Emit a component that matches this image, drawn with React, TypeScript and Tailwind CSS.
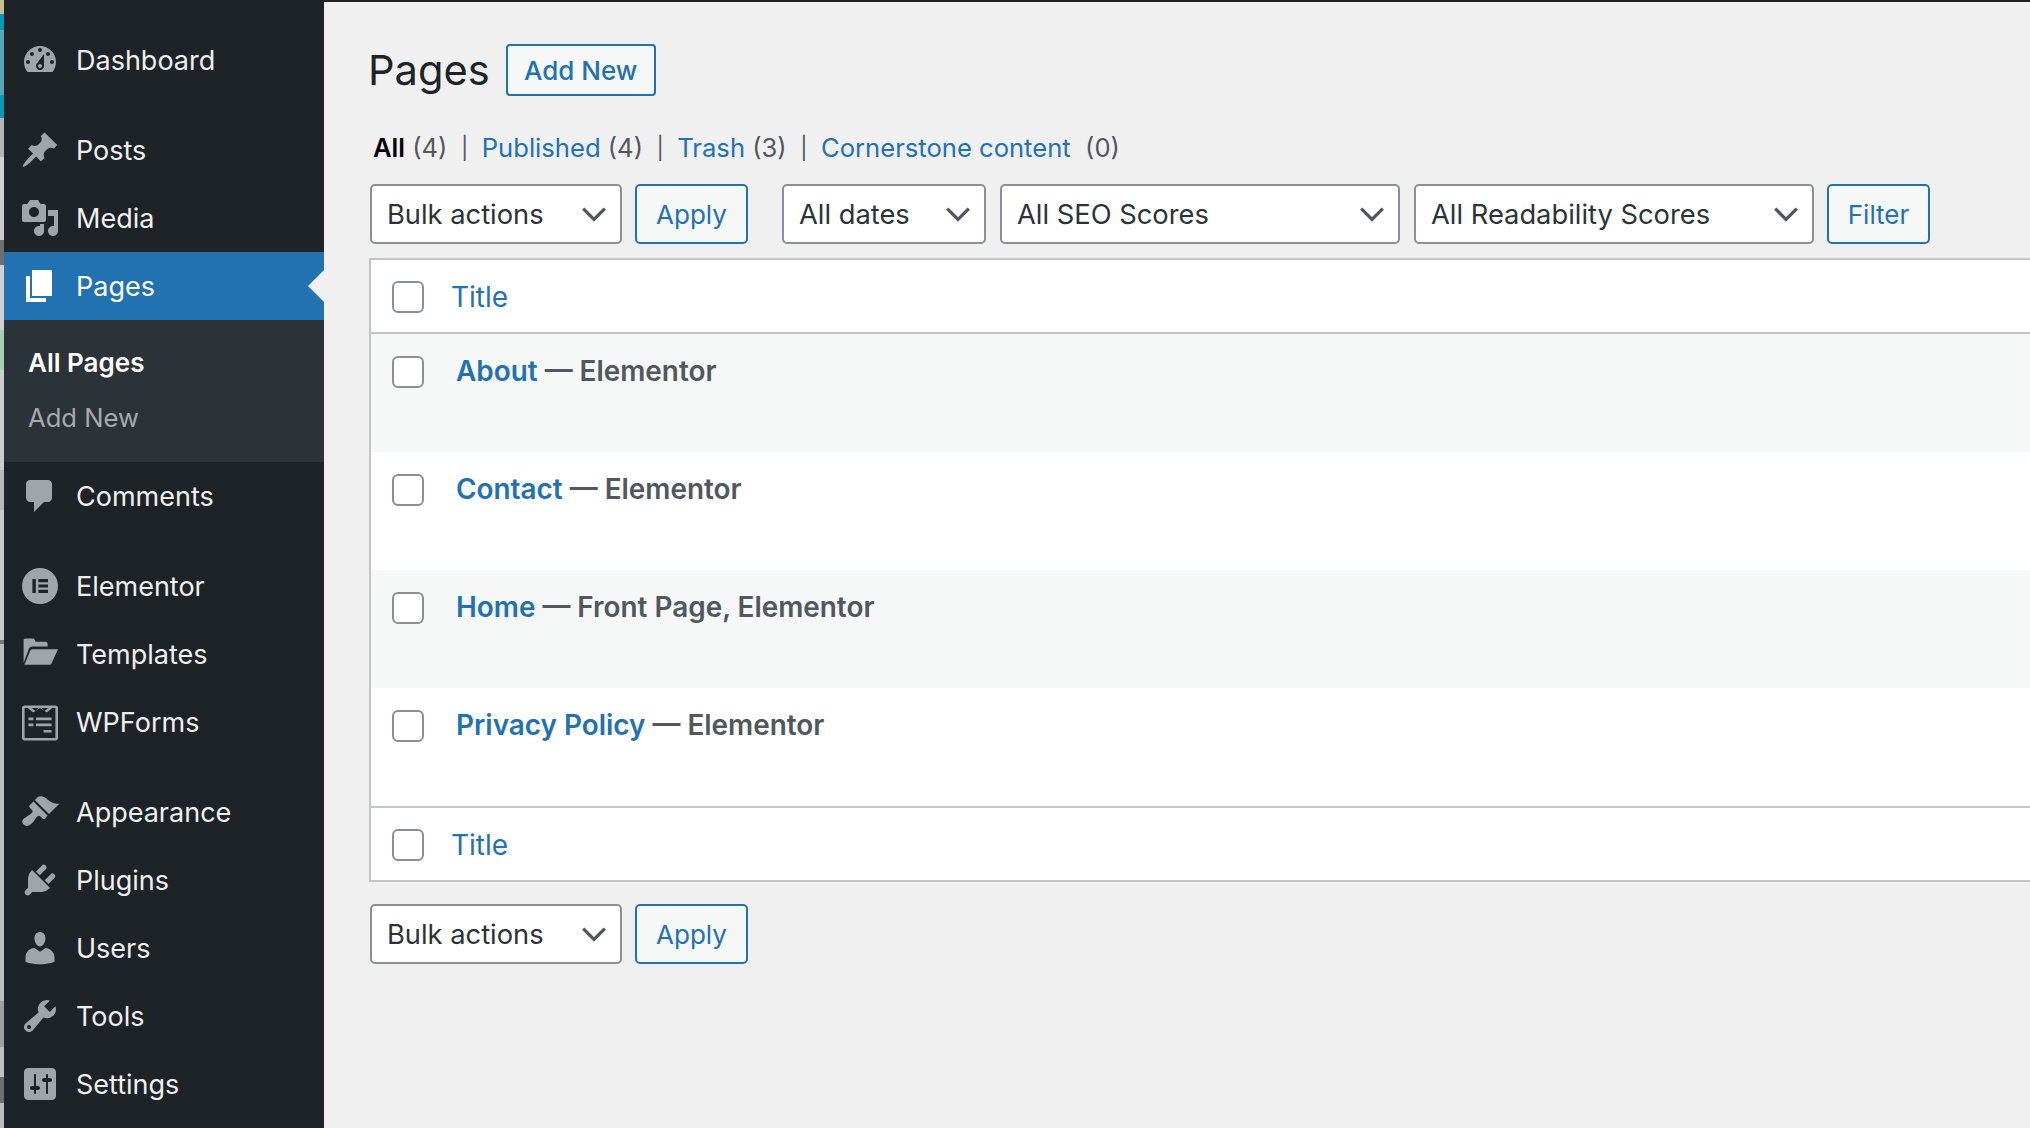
const P = ({ d }: { d: string }) => (
  <svg viewBox="0 0 20 20" className="w-10 h-10 fill-[#a0a5aa]" fillRule="evenodd"><path d={d} /></svg>
);

const Elementor = () => (
  <svg viewBox="0 0 20 20" className="w-10 h-10 fill-[#a0a5aa]">
    <path fillRule="evenodd" d="M10 1a9 9 0 1 0 0 18 9 9 0 0 0 0-18zM6.200 6.500h1.700v7H6.200zM9.200 6.500h4.800v1.600H9.200zM9.200 9.200h4.800v1.600H9.200zM9.200 11.900h4.800v1.600H9.200z" />
  </svg>
);

const Folder = () => (
  <svg viewBox="0 0 20 20" className="w-10 h-10 fill-[#a0a5aa]">
    <path d="M1.800 14.500V3.200c0-.5.400-.9.900-.9h3.600c.5 0 .8.200 1 .6l.5 1h5c.5 0 1 .4 1 1v1.300H6.200c-.8 0-1.400.4-1.700 1.100l-2.700 7.200z" />
    <path d="M2.200 15.400l2.900-7c.2-.5.600-.8 1.100-.8h12.800l-3.200 7c-.2.500-.7.800-1.200.8H2.200z" />
  </svg>
);

const WPForms = () => (
  <svg viewBox="0 0 20 20" className="w-10 h-10 fill-[#a0a5aa]">
    <path fillRule="evenodd" d="M2.200 1.800h15.600c.7 0 1.200.5 1.200 1.200v15c0 .7-.5 1.200-1.200 1.200H2.200c-.7 0-1.200-.5-1.200-1.200V3c0-.7.500-1.200 1.200-1.200zM2.300 3v15h15.400V3h-1.600l-2.700 2.300L10 3 6.600 5.300 3.900 3zM5.800 3l1.900 1.500L9.300 3zM10.700 3l1.600 1.500L14.200 3z" />
    <path d="M4.200 7.800h2.500v1.300H4.200zM8 7.800h7.800v1.300H8zM4.200 10.800h2.500v1.300H4.200zM8 10.800h7.800v1.300H8zM11.800 14h4v1.300h-4z" />
  </svg>
);

const d = {
  dashboard: "M3.76 16h12.48c1.1-1.37 1.76-3.11 1.76-5 0-4.42-3.58-8-8-8s-8 3.58-8 8c0 1.89.66 3.63 1.76 5zM10 4c.55 0 1 .45 1 1s-.45 1-1 1-1-.45-1-1 .45-1 1-1zM6 6c.55 0 1 .45 1 1s-.45 1-1 1-1-.45-1-1 .45-1 1-1zm8 0c.55 0 1 .45 1 1s-.45 1-1 1-1-.45-1-1 .45-1 1-1zm-5.37 5.55L12 7v6c0 1.1-.9 2-2 2s-2-.9-2-2c0-.57.24-1.08.63-1.45zM4 10c.55 0 1 .45 1 1s-.45 1-1 1-1-.45-1-1 .45-1 1-1zm12 0c.55 0 1 .45 1 1s-.45 1-1 1-1-.45-1-1 .45-1 1-1zm-5 3c0-.55-.45-1-1-1s-1 .45-1 1 .45 1 1 1 1-.45 1-1z",
  post: "M10.44 3.02l1.82-1.82 6.36 6.35-1.83 1.82c-1.05-.68-2.48-.57-3.41.36l-.75.75c-.92.93-1.04 2.35-.35 3.41l-1.83 1.82-2.41-2.41-2.8 2.79c-.42.42-3.38 2.71-3.8 2.29s1.86-3.39 2.28-3.81l2.79-2.79L4.1 9.36l1.83-1.82c1.05.69 2.48.57 3.4-.36l.75-.75c.93-.92 1.05-2.35.36-3.41z",
  media: "M13 11V4c0-.55-.45-1-1-1h-1.67L9 1H5L3.67 3H2c-.55 0-1 .45-1 1v7c0 .55.45 1 1 1h10c.55 0 1-.45 1-1zM7 4.5c1.38 0 2.5 1.12 2.5 2.5S8.38 9.5 7 9.5 4.5 8.38 4.5 7 5.62 4.5 7 4.5zM14 6h5v10.5c0 1.38-1.12 2.5-2.5 2.5S14 17.88 14 16.5s1.12-2.5 2.5-2.5c.17 0 .34.02.5.05V9h-3V6zm-4 8.05V13h2v3.5c0 1.38-1.12 2.5-2.5 2.5S7 17.88 7 16.5 8.12 14 9.5 14c.17 0 .34.02.5.05z",
  page: "M6 15V2h10v13H6zm-1 1h8v2H3V5h2v11z",
  comments: "M5 2h9c1.1 0 2 .9 2 2v7c0 1.1-.9 2-2 2h-2l-5 5v-5H5c-1.1 0-2-.9-2-2V4c0-1.1.9-2 2-2z",
  appearance: "M14.48 11.06L7.41 3.99l1.5-1.5c.5-.56 2.3-.47 3.51.32 1.21.8 1.43 1.28 2.91 2.1 1.18.64 2.45 1.26 4.45.85zm-.71.71L6.7 4.7 4.93 6.47c-.39.39-.39 1.02 0 1.41l1.06 1.06c.39.39.39 1.03 0 1.42-.6.6-1.43 1.11-2.21 1.69-.35.26-.7.53-1.01.84C1.43 13.23.4 14.91 1.8 16.31c1.4 1.4 3.08.37 4.4-.96.31-.31.58-.66.84-1.01.58-.78 1.09-1.61 1.69-2.21.39-.39 1.03-.39 1.42 0l1.06 1.06c.39.39 1.02.39 1.41 0z",
  plugins: "M13.11 4.36L9.87 7.6 8 5.73l3.24-3.24c.35-.34 1.05-.2 1.56.32.52.51.66 1.21.31 1.55zm-8 1.77l.91-1.12 9.01 9.01-1.19.84c-.71.71-2.63 1.16-3.82 1.16H6.14L4.9 17.26c-.59.59-1.54.59-2.12 0-.59-.58-.59-1.53 0-2.12l1.24-1.24v-3.88c0-1.13.4-3.19 1.09-3.89zm7.26 3.97l3.24-3.24c.34-.35 1.04-.21 1.55.31.52.51.66 1.21.31 1.55l-3.24 3.25z",
  users: "M10 9.25c-2.27 0-2.73-3.44-2.73-3.44C7 4.02 7.82 2 9.97 2c2.16 0 2.98 2.02 2.71 3.81 0 0-.41 3.44-2.68 3.44zm0 2.57L12.72 10c2.39 0 4.52 2.33 4.52 4.53v2.49s-3.65 1.13-7.24 1.13c-3.65 0-7.24-1.13-7.24-1.13v-2.49c0-2.25 1.94-4.48 4.47-4.48z",
  tools: "M16.68 9.77c-1.34 1.34-3.3 1.67-4.95.99l-5.41 6.52c-.99.99-2.59.99-3.58 0s-.99-2.59 0-3.57l6.52-5.42c-.68-1.65-.35-3.61.99-4.95 1.28-1.28 3.12-1.62 4.72-1.06l-2.89 2.89 2.82 2.82 2.86-2.87c.53 1.58.18 3.39-1.08 4.65zM3.81 16.21c.4.39 1.04.39 1.43 0 .4-.4.4-1.04 0-1.43-.39-.4-1.03-.4-1.43 0-.39.39-.39 1.03 0 1.43z",
  settings: "M18 16V4c0-1.1-.9-2-2-2H4c-1.1 0-2 .9-2 2v12c0 1.1.9 2 2 2h12c1.1 0 2-.9 2-2zM8 11h1c.55 0 1 .45 1 1s-.45 1-1 1H8v1.5c0 .28-.22.5-.5.5s-.5-.22-.5-.5V13H6c-.55 0-1-.45-1-1s.45-1 1-1h1V5.5c0-.28.22-.5.5-.5s.5.22.5.5V11zm5-2h-1c-.55 0-1-.45-1-1s.45-1 1-1h1V5.5c0-.28.22-.5.5-.5s.5.22.5.5V7h1c.55 0 1 .45 1 1s-.45 1-1 1h-1v5.500c0 .28-.22.5-.5.5s-.5-.22-.5-.5V9z",
};

const Item = ({ icon, label }: { icon: React.ReactNode; label: string }) => (
  <div className="h-[68px] flex items-center pl-4 gap-4 text-[27px] text-[#f0f0f1]">
    {icon}
    <span className="pt-0.5">{label}</span>
  </div>
);

const Chevron = () => (
  <svg viewBox="0 0 20 20" className="w-9 h-9 shrink-0" fill="none" stroke="#50575e" strokeWidth="1.8"><path d="M4 7l6 6 6-6" /></svg>
);

const Select = ({ label, w }: { label: string; w: string }) => (
  <div className={`${w} h-[60px] shrink-0 rounded-[5px] border-2 border-[#8c8f94] bg-white pl-[15px] pr-2 flex items-center justify-between text-[27.3px] text-[#2c3338]`}>
    <span className="pt-0.5">{label}</span>
    <Chevron />
  </div>
);

const Btn = ({ label, w }: { label: string; w: string }) => (
  <div className={`${w} h-[60px] shrink-0 rounded-[5px] border-2 border-[#2271b1] bg-[#f6f7f7] flex items-center justify-center text-[26px] text-[#2271b1]`}>{label}</div>
);

const Check = () => (
  <div className="w-8 h-8 shrink-0 rounded-[6px] border-2 border-[#8c8f94] bg-white" />
);

const HeadRow = ({ cls }: { cls: string }) => (
  <div className={`${cls} h-[74px] bg-white flex items-center pl-[21px] pt-0.5 gap-[27px] text-[28px] text-[#2271b1]`}>
    <Check />
    <span>Title</span>
  </div>
);

const Row = ({ title, tail, alt }: { title: string; tail: string; alt?: boolean }) => (
  <div className={`${alt ? "bg-[#f6f7f7]" : "bg-white"} h-[118px] flex items-start pl-[21px] pt-[22px] gap-8 text-[27.9px]`}>
    <Check />
    <div className="font-semibold leading-[34px] -mt-0.5 text-[#50575e] whitespace-nowrap">
      <span className="text-[#2271b1]">{title}</span> — {tail}
    </div>
  </div>
);

const stripe = [
  "h-[14px] bg-[#c9c18c]", "h-[16px] bg-[#069ab8]", "h-[65px] bg-[#5aa6b9]", "h-[23px] bg-[#0899b7]",
  "h-[39px] bg-[#b5b5b5]", "h-[43px] bg-[#d2d2d2]", "h-[40px] bg-[#cccccc]", "h-[25px] bg-[#6e6e6e]", "h-[65px] bg-[#d0d0d0]",
  "h-[40px] bg-[#a9cdb6]", "h-[100px] bg-[#cdcdcd]", "h-[40px] bg-[#b8b8b8]", "h-[130px] bg-[#c8c8c8]", "h-[4px] bg-[#777777]",
  "h-[357px] bg-[#bebebe]", "h-[46px] bg-[#a0a0a0]", "h-[30px] bg-[#c0c0c0]", "h-[26px] bg-[#6f6f6f]", "flex-1 bg-[#bdbdbd]",
];

export default function App() {
  return (
    <div className="w-[2030px] h-[1128px] overflow-hidden flex bg-[#f0f0f1] font-['Inter',sans-serif]">
      <div className="w-1 h-full flex flex-col">
        {stripe.map((c, i) => <div key={i} className={c} />)}
      </div>
      <aside className="w-[320px] h-full shrink-0 bg-[#1d2327] pt-[26px]">
        <Item icon={<P d={d.dashboard} />} label="Dashboard" />
        <div className="h-[22px]" />
        <Item icon={<P d={d.post} />} label="Posts" />
        <Item icon={<P d={d.media} />} label="Media" />
        <div className="relative h-[68px] bg-[#2271b1] flex items-center pl-4 gap-4 text-[27px] text-white">
          <svg viewBox="0 0 20 20" className="w-10 h-10 fill-white"><path d={d.page} /></svg>
          <span className="pt-0.5">Pages</span>
          <div className="absolute right-0 top-[18px] w-0 h-0 border-y-[16px] border-y-transparent border-r-[16px] border-r-[#f0f0f1]" />
        </div>
        <div className="h-[142px] bg-[#2c3338] pt-5 pl-6 text-[26px] flex flex-col">
          <div className="h-11 flex items-center font-semibold text-white">All Pages</div>
          <div className="h-[68px] flex items-center text-[25.6px] text-[#a7aaad]">Add New</div>
        </div>
        <Item icon={<P d={d.comments} />} label="Comments" />
        <div className="h-[22px]" />
        <Item icon={<Elementor />} label="Elementor" />
        <Item icon={<Folder />} label="Templates" />
        <Item icon={<WPForms />} label="WPForms" />
        <div className="h-[22px]" />
        <Item icon={<P d={d.appearance} />} label="Appearance" />
        <Item icon={<P d={d.plugins} />} label="Plugins" />
        <Item icon={<P d={d.users} />} label="Users" />
        <Item icon={<P d={d.tools} />} label="Tools" />
        <Item icon={<P d={d.settings} />} label="Settings" />
      </aside>
      <main className="flex-1 min-w-0 flex flex-col border-t-2 border-[#1d2327] pt-[42px] pl-[45px]">
        <div className="flex items-center gap-[16px] h-[52px]">
          <h1 className="text-[41.6px] -ml-px text-[#1d2327]">Pages</h1>
          <div className="w-[150px] h-[52px] rounded-[4px] border-2 border-[#2271b1] bg-[#f6f7f7] flex items-center justify-center text-[26px] font-medium text-[#2271b1]">Add New</div>
        </div>
        <div className="mt-[30px] h-[44px] pl-1 flex items-center text-[25.6px] text-[#50575e] whitespace-nowrap">
          <span className="font-semibold text-black">All</span>&nbsp;(4)
          <span className="mx-[13.5px] text-[22px]">|</span>
          <span className="text-[#2271b1]">Published</span>&nbsp;(4)
          <span className="mx-[13.5px] text-[22px]">|</span>
          <span className="text-[#2271b1]">Trash</span>&nbsp;(3)
          <span className="mx-[13.5px] text-[22px]">|</span>
          <span className="text-[#2271b1]">Cornerstone content</span>&nbsp;&nbsp;(0)
        </div>
        <div className="mt-[14px] flex items-center pl-[1px]">
          <Select label="Bulk actions" w="w-[252px]" />
          <div className="w-[13px]" />
          <Btn label="Apply" w="w-[113px]" />
          <div className="w-[34px]" />
          <Select label="All dates" w="w-[204px]" />
          <div className="w-[14px]" />
          <Select label="All SEO Scores" w="w-[400px]" />
          <div className="w-[14px]" />
          <Select label="All Readability Scores" w="w-[400px]" />
          <div className="w-[13px]" />
          <Btn label="Filter" w="w-[103px]" />
        </div>
        <div className="mt-[14px] border-2 border-r-0 border-[#c3c4c7] flex flex-col">
          <HeadRow cls="border-b-2 border-[#c3c4c7]" />
          <Row alt title="About" tail="Elementor" />
          <Row title="Contact" tail="Elementor" />
          <Row alt title="Home" tail="Front Page, Elementor" />
          <Row title="Privacy Policy" tail="Elementor" />
          <HeadRow cls="border-t-2 border-[#c3c4c7]" />
        </div>
        <div className="mt-[22px] flex items-center pl-[1px]">
          <Select label="Bulk actions" w="w-[252px]" />
          <div className="w-[13px]" />
          <Btn label="Apply" w="w-[113px]" />
        </div>
      </main>
    </div>
  );
}
